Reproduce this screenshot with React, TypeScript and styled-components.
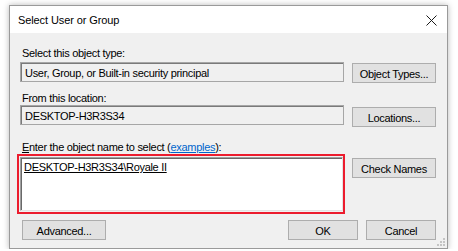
import React from "react";
import styled, { createGlobalStyle } from "styled-components";

const Global = createGlobalStyle`
  html, body { margin: 0; padding: 0; background: #ffffff; }
  * { box-sizing: border-box; }
`;

const Page = styled.div`
  padding: 5px 0 0 9px;
  font-family: "Liberation Sans", Arial, sans-serif;
  font-size: 11px;
  letter-spacing: -0.3px;
  color: #000;
`;

const Dialog = styled.div`
  position: relative;
  width: 439px;
  background: #f0f0f0;
  border: 1px solid #9a9a9a;
  box-shadow: 0 0 6px rgba(0, 0, 0, 0.28);
  display: flex;
  flex-direction: column;
`;

const TitleBar = styled.div`
  height: 27px;
  background: #ffffff;
  display: flex;
  align-items: center;
  justify-content: space-between;
  padding: 0 8px 0 8px;
`;

const Title = styled.span`
  font-size: 11px;
  letter-spacing: -0.1px;
  padding-top: 1px;
`;

const CloseBtn = styled.div`
  width: 28px;
  height: 27px;
  display: flex;
  align-items: center;
  justify-content: center;
  margin-right: -6px;
  padding-top: 1px;
`;

const Body = styled.div`
  padding: 13px 11px 8px 10px;
  display: flex;
  flex-direction: column;
`;

const Label = styled.div<{ $gap?: number }>`
  height: 14px;
  line-height: 14px;
  margin-top: ${(p) => p.$gap ?? 0}px;
  padding-left: 2px;
  white-space: nowrap;
`;

const Row = styled.div<{ $gap?: number }>`
  display: grid;
  grid-template-columns: 1fr 84px;
  column-gap: 8px;
  align-items: start;
  margin-top: ${(p) => p.$gap ?? 0}px;
`;

const ReadOnlyBox = styled.div`
  height: 20px;
  border: 1px solid #a6a6a6;
  box-shadow: inset 1px 1px 0 #7a7a7a;
  background: #f0f0f0;
  display: flex;
  align-items: center;
  padding: 1px 0 0 4px;
  white-space: nowrap;
`;

const Highlight = styled.div`
  height: 60px;
  margin-left: -3px;
  margin-right: -1px;
  border: 2px solid #ec1c2e;
  padding: 1px 0 1px 1px;
`;

const TextArea = styled.div`
  height: 100%;
  background: #ffffff;
  border-top: 1px solid #a0a0a0;
  border-left: 1px solid #a0a0a0;
  border-right: 1px solid #e3e3e3;
  border-bottom: 1px solid #e3e3e3;
  box-shadow: inset 1px 1px 0 #696969;
  padding: 2px 0 0 3px;
  line-height: 14px;
`;

const Resolved = styled.span`
  text-decoration: underline;
  text-underline-offset: 1px;
`;

const Button = styled.div<{ $offset?: number; $width?: number }>`
  width: ${(p) => p.$width ?? 84}px;
  height: 20px;
  margin-top: ${(p) => p.$offset ?? 0}px;
  background: #e1e1e1;
  border: 1px solid #adadad;
  display: flex;
  align-items: center;
  justify-content: center;
  padding-top: 1px;
  white-space: nowrap;
`;

const Footer = styled.div`
  display: flex;
  align-items: center;
  gap: 8px;
  margin-top: 6px;
  padding-left: 2px;
`;

const Spacer = styled.div`
  flex: 1;
`;

const Access = styled.span`
  text-decoration: underline;
`;

const Link = styled.span`
  color: #0066cc;
  text-decoration: underline;
`;

const Grip = styled.svg`
  position: absolute;
  right: 2px;
  bottom: 2px;
`;

export default function App() {
  return (
    <>
      <Global />
      <Page>
        <Dialog>
          <TitleBar>
            <Title>Select User or Group</Title>
            <CloseBtn>
              <svg width="11" height="11" viewBox="0 0 11 11">
                <path d="M0.5 0.5 L10.5 10.5 M10.5 0.5 L0.5 10.5" stroke="#1a1a1a" strokeWidth="1" />
              </svg>
            </CloseBtn>
          </TitleBar>
          <Body>
            <Label>Select this object type:</Label>
            <Row $gap={2}>
              <ReadOnlyBox>User, Group, or Built-in security principal</ReadOnlyBox>
              <Button $offset={1}>Object Types...</Button>
            </Row>
            <Label $gap={8}>From this location:</Label>
            <Row>
              <ReadOnlyBox>DESKTOP-H3R3S34</ReadOnlyBox>
              <Button $offset={2}>Locations...</Button>
            </Row>
            <Label $gap={13}>
              <Access>E</Access>nter the object name to select (<Link>examples</Link>):
            </Label>
            <Row>
              <Highlight>
                <TextArea>
                  <Resolved>DESKTOP-H3R3S34\Royale II</Resolved>
                </TextArea>
              </Highlight>
              <Button $offset={4}>Check Names</Button>
            </Row>
            <Footer>
              <Button>Advanced...</Button>
              <Spacer />
              <Button $width={70}>OK</Button>
              <Button $width={70}>Cancel</Button>
            </Footer>
          </Body>
          <Grip width="8" height="8" viewBox="0 0 8 8">
            <rect x="6" y="0" width="2" height="2" fill="#c4c4c4" />
            <rect x="3" y="3" width="2" height="2" fill="#c4c4c4" />
            <rect x="6" y="3" width="2" height="2" fill="#c4c4c4" />
            <rect x="0" y="6" width="2" height="2" fill="#c4c4c4" />
            <rect x="3" y="6" width="2" height="2" fill="#c4c4c4" />
            <rect x="6" y="6" width="2" height="2" fill="#c4c4c4" />
          </Grip>
        </Dialog>
      </Page>
    </>
  );
}
